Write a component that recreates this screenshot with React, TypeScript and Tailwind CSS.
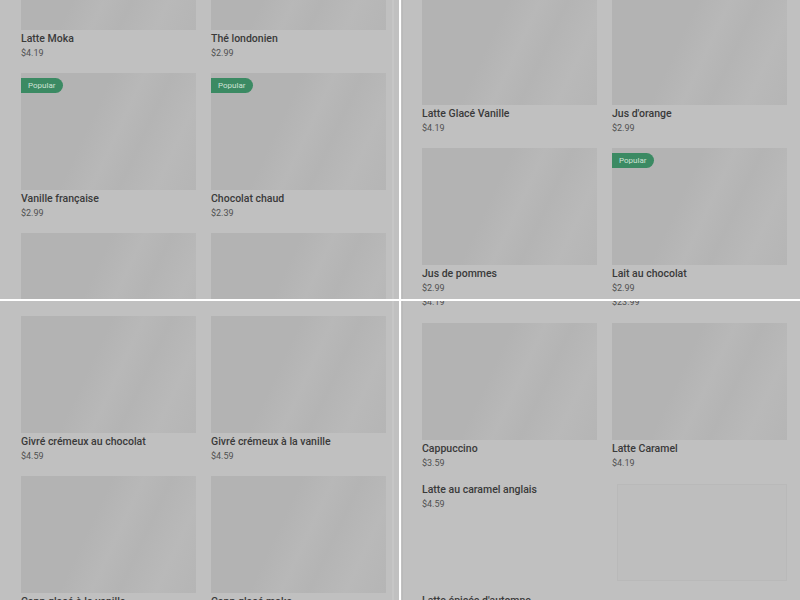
import React from "react";

type Item = {
  name: string;
  price: string;
  popular?: boolean;
  noImage?: boolean;
  frame?: boolean;
};

const shimmer =
  "bg-[linear-gradient(115deg,#b3b3b3_0%,#b3b3b3_40%,#b8b8b8_54%,#b4b4b4_66%,#b9b9b9_82%,#b5b5b5_100%)]";

const Card = ({ item }: { item: Item }) => {
  if (item.frame) {
    return (
      <div className="pl-[5px] pt-[1px]">
        <div className="h-[97px] border border-[#b9b9b9] bg-[#bebebe]" />
      </div>
    );
  }
  return (
    <div className="flex flex-col">
      {!item.noImage && (
        <div className={`relative h-[117px] ${shimmer}`}>
          {item.popular && (
            <span className="absolute left-0 top-[5px] h-[15px] rounded-r-full bg-[#3b8a63] pl-[7px] pr-[8px] text-[8px] leading-[15px] text-[#cfe3d7]">
              Popular
            </span>
          )}
        </div>
      )}
      {item.name ? (
        <div className={item.noImage ? "" : "mt-[2px]"}>
          <p className="text-[10.5px] font-medium leading-[14px] text-[#3a3a3a]">{item.name}</p>
          <p className="text-[9px] leading-[14px] text-[#505050]">{item.price}</p>
        </div>
      ) : (
        <div className="h-[30px]" />
      )}
    </div>
  );
};

const Panel = ({
  items,
  offset,
  side,
}: {
  items: Item[];
  offset: string;
  side: "left" | "right";
}) => (
  <div className="relative h-[299px] overflow-hidden bg-[#c0c0c0]">
    {side === "left" ? (
      <div className="absolute right-[5px] top-0 h-full w-[2px] bg-[#c6c6c6]" />
    ) : (
      <div className="absolute left-[1px] top-0 h-full w-px bg-[#b9b9b9]" />
    )}
    <div className={`${offset} grid grid-cols-[175px_175px] gap-x-[15px] gap-y-[13px] pl-[21px]`}>
      {items.map((it, i) => (
        <Card key={i} item={it} />
      ))}
    </div>
  </div>
);

const q1: Item[] = [
  { name: "Latte Moka", price: "$4.19" },
  { name: "Thé londonien", price: "$2.99" },
  { name: "Vanille française", price: "$2.99", popular: true },
  { name: "Chocolat chaud", price: "$2.39", popular: true },
  { name: "", price: "" },
  { name: "", price: "" },
];

const q2: Item[] = [
  { name: "Latte Glacé Vanille", price: "$4.19" },
  { name: "Jus d'orange", price: "$2.99" },
  { name: "Jus de pommes", price: "$2.99" },
  { name: "Lait au chocolat", price: "$2.99", popular: true },
];

const q3: Item[] = [
  { name: "Givré crémeux au chocolat", price: "$4.59" },
  { name: "Givré crémeux à la vanille", price: "$4.59" },
  { name: "Capp glacé à la vanille", price: "$4.59" },
  { name: "Capp glacé moka", price: "$4.59" },
];

const q4: Item[] = [
  { name: "Cappuccino", price: "$3.59" },
  { name: "Latte Caramel", price: "$4.19" },
  { name: "Latte au caramel anglais", price: "$4.59", noImage: true },
  { name: "", price: "", frame: true },
  { name: "Latte épicée d'automne", price: "$4.59", noImage: true },
];

export default function App() {
  return (
    <div
      className="grid h-[600px] w-[800px] grid-cols-[399px_399px] gap-[2px] bg-white"
      style={{ fontFamily: "Roboto, 'Noto Sans', sans-serif" }}
    >
      <Panel items={q1} offset="mt-[-87px]" side="left" />
      <Panel items={q2} offset="mt-[-12px]" side="right" />
      <Panel items={q3} offset="mt-[15px]" side="left" />
      <div className="relative h-[299px] overflow-hidden bg-[#c0c0c0]">
        <div className="absolute left-[1px] top-0 h-full w-px bg-[#b9b9b9]" />
        <div className="mt-[-6px] mb-[14px] grid grid-cols-[175px_175px] gap-x-[15px] pl-[21px]">
          <p className="text-[9px] leading-[14px] text-[#505050]">$4.19</p>
          <p className="text-[9px] leading-[14px] text-[#505050]">$23.99</p>
        </div>
        <div className="grid grid-cols-[175px_175px] gap-x-[15px] gap-y-[13px] pl-[21px]">
          {q4.map((it, i) => (
            <Card key={i} item={it} />
          ))}
        </div>
      </div>
    </div>
  );
}
